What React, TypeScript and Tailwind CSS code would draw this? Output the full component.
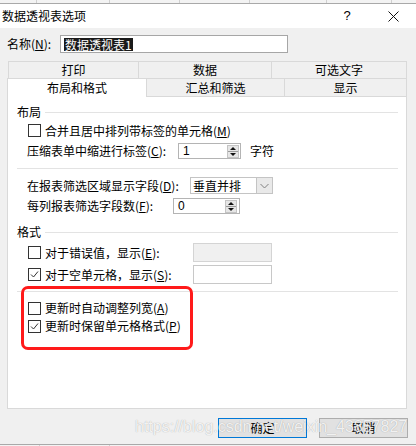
import React from "react";

function Box({ checked }: { checked?: boolean }) {
  return (
    <span className="w-[13px] h-[13px] border border-[#333333] bg-white flex items-center justify-center shrink-0">
      {checked && (
        <svg width="11" height="11" viewBox="0 0 11 11">
          <path d="M2 5.5 L4.5 8 L9 2.5" fill="none" stroke="#333333" strokeWidth="1" />
        </svg>
      )}
    </span>
  );
}

function SpinBtn() {
  return (
    <svg width="12" height="13" viewBox="0 0 12 13" className="shrink-0">
      <rect x="0.5" y="0.5" width="11" height="12" fill="#e6e6e6" stroke="#c4c4c4" />
      <line x1="1" y1="6.5" x2="11" y2="6.5" stroke="#9a9a9a" />
      <polygon points="3,5 9,5 6,2" fill="#111" />
      <polygon points="3,8 9,8 6,11" fill="#111" />
    </svg>
  );
}

function Acc({ k }: { k: string }) {
  return (
    <>
      (<span className="underline underline-offset-1">{k}</span>)
    </>
  );
}

export default function App() {
  return (
    <div className="relative w-[416px] h-[446px] overflow-hidden bg-[#f0f0f0] text-[12px] leading-[16px] text-black font-['Noto_Sans_CJK_SC','Noto_Sans',sans-serif]">
      {/* top strip (window behind) */}
      <div className="flex h-[4px] bg-[#f3f3f3] border-b border-[#a9a9a9]">
        <div className="w-[37px] border-r border-[#d0d0d0]" />
        <div className="w-[73px] border-r border-[#d0d0d0]" />
        <div className="w-[70px] border-r border-[#d0d0d0]" />
        <div className="w-[70px] border-r border-[#d0d0d0]" />
        <div className="w-[77px] border-r border-[#d0d0d0]" />
        <div className="w-[65px] border-r border-[#d0d0d0]" />
      </div>

      {/* title bar */}
      <div className="h-[24px] bg-white flex items-center">
        <div className="pl-[2px] text-[12px] leading-[16px]">数据透视表选项</div>
        <div className="flex-1" />
        <div className="w-[46px] h-[24px] flex items-center justify-center text-[13px] font-['Liberation_Sans',sans-serif]">?</div>
        <div className="w-[46px] h-[24px] flex items-center justify-center">
          <svg width="11" height="11" viewBox="0 0 11 11">
            <path d="M0.5 0.5 L10.5 10.5 M10.5 0.5 L0.5 10.5" stroke="#111" strokeWidth="1" />
          </svg>
        </div>
      </div>

      {/* body */}
      <div className="h-[416px] flex flex-col">
        {/* name row */}
        <div className="pt-[7px] pl-[7px] flex items-center">
          <span className="w-[53px]">
            名称<Acc k="N" />:
          </span>
          <div className="w-[228px] h-[18px] border border-[#a6a6a6] bg-white flex items-center">
            <span className="ml-[3px] bg-[#1a1a1a] text-white leading-[13px] px-[1px]">数据透视表1</span>
          </div>
        </div>

        {/* tabs row 1 */}
        <div className="mt-[8px] ml-[8px] flex h-[17px]">
          <div className="w-[130px] border-t border-l border-[#d9d9d9] text-center leading-[16px]">打印</div>
          <div className="w-[133px] border-t border-l border-[#d9d9d9] text-center leading-[16px]">数据</div>
          <div className="w-[136px] border-t border-l border-r border-[#d9d9d9] text-center leading-[16px]">可选文字</div>
        </div>
        {/* tabs row 2 */}
        <div className="ml-[7px] flex h-[18px] items-start">
          <div className="relative z-10 w-[140px] h-[19px] bg-white border-t border-l border-r border-[#d9d9d9] text-center leading-[17px]">布局和格式</div>
          <div className="w-[138px] h-[18px] border-t border-r border-[#d9d9d9] text-center leading-[17px]">汇总和筛选</div>
          <div className="w-[122px] h-[18px] border-t border-r border-[#d9d9d9] text-center leading-[17px]">显示</div>
        </div>

        {/* panel */}
        <div className="ml-[7px] w-[400px] h-[313px] border border-[#d9d9d9] bg-white flex flex-col">
          <div className="mt-[7px] h-[16px] flex items-center pl-[9px] pr-[8px] gap-[4px]">
            <span>布局</span>
            <div className="flex-1 h-px bg-[#e3e3e3]" />
          </div>
          <div className="mt-[2px] h-[17px] flex items-center pl-[20px] gap-[4px]">
            <Box />
            <span>
              合并且居中排列带标签的单元格<Acc k="M" />
            </span>
          </div>
          <div className="mt-[4px] h-[16px] flex items-center pl-[19px]">
            <span className="w-[151px] shrink-0">
              压缩表单中缩进行标签<Acc k="C" />:
            </span>
            <div className="w-[63px] h-[16px] border border-[#b4b4b4] flex items-center justify-between pl-[4px] pr-[1px]">
              <span className="font-['Liberation_Sans',sans-serif]">1</span>
              <SpinBtn />
            </div>
            <span className="ml-[9px]">字符</span>
          </div>
          <div className="mt-[9px] ml-[9px] mr-[8px] h-px bg-[#e3e3e3]" />
          <div className="mt-[8px] h-[17px] flex items-center pl-[19px]">
            <span className="w-[163px] shrink-0">
              在报表筛选区域显示字段<Acc k="D" />:
            </span>
            <div className="w-[83px] h-[17px] border border-[#c4c4c4] flex items-stretch">
              <span className="flex-1 pl-[2px] leading-[15px]">垂直并排</span>
              <div className="w-[16px] bg-[#e9e9e9] border-l border-[#c4c4c4] flex items-center justify-center">
                <svg width="9" height="6" viewBox="0 0 9 6">
                  <path d="M0.5 1 L4.5 5 L8.5 1" fill="none" stroke="#808080" strokeWidth="1" />
                </svg>
              </div>
            </div>
          </div>
          <div className="mt-[4px] h-[16px] flex items-center pl-[19px]">
            <span className="w-[146px] shrink-0">
              每列报表筛选字段数<Acc k="F" />:
            </span>
            <div className="w-[67px] h-[16px] border border-[#b4b4b4] flex items-center justify-between pl-[4px] pr-[2px]">
              <span className="font-['Liberation_Sans',sans-serif]">0</span>
              <SpinBtn />
            </div>
          </div>
          <div className="mt-[10px] h-[16px] flex items-center pl-[9px] pr-[8px] gap-[4px]">
            <span>格式</span>
            <div className="flex-1 h-px bg-[#e3e3e3]" />
          </div>
          <div className="mt-[3px] h-[19px] flex items-center pl-[20px]">
            <Box />
            <span className="ml-[4px] w-[148px]">
              对于错误值，显示<Acc k="E" />:
            </span>
            <div className="w-[79px] h-[19px] border border-[#d4d4d4] bg-[#f0f0f0]" />
          </div>
          <div className="mt-[3px] h-[19px] flex items-center pl-[20px]">
            <Box checked />
            <span className="ml-[4px] w-[148px]">
              对于空单元格，显示<Acc k="S" />:
            </span>
            <div className="w-[79px] h-[19px] border border-[#c8c8c8] bg-white" />
          </div>
          <div className="mt-[7px] ml-[9px] mr-[8px] h-px bg-[#e3e3e3]" />
          <div className="mt-[8px] h-[16px] flex items-center pl-[20px] gap-[4px]">
            <Box />
            <span>
              更新时自动调整列宽<Acc k="A" />
            </span>
          </div>
          <div className="mt-[2px] h-[16px] flex items-center pl-[20px] gap-[4px]">
            <Box checked />
            <span>
              更新时保留单元格格式<Acc k="P" />
            </span>
          </div>
        </div>

        {/* buttons */}
        <div className="mt-[9px] flex justify-end pr-[8px] gap-[12px]">
          <div className="w-[89px] h-[20px] bg-[#e1e1e1] border border-[#0078d7] flex items-center justify-center">确定</div>
          <div className="w-[89px] h-[20px] bg-[#e1e1e1] border border-[#adadad] flex items-center justify-center">取消</div>
        </div>
      </div>

      {/* bottom strip */}
      <div className="h-px bg-[#a9a9a9]" />
      <div className="flex h-[1px] bg-[#f3f3f3]">
        <div className="w-[40px] border-r border-[#d0d0d0]" />
        <div className="w-[70px] border-r border-[#d0d0d0]" />
      </div>

      {/* red annotation */}
      <div className="absolute left-[21px] top-[286px] w-[172px] h-[64px] border-[3px] border-[#ff1a1a] rounded-[7px]" />

      {/* watermark */}
      <div className="absolute left-[135px] top-[417px] text-[16px] leading-[20px] text-white/85 font-['Liberation_Sans',sans-serif] [text-shadow:0_0_1px_rgba(0,0,0,0.35)] whitespace-nowrap">
        https://blog.csdn.net/weixin_43857827
      </div>
    </div>
  );
}
